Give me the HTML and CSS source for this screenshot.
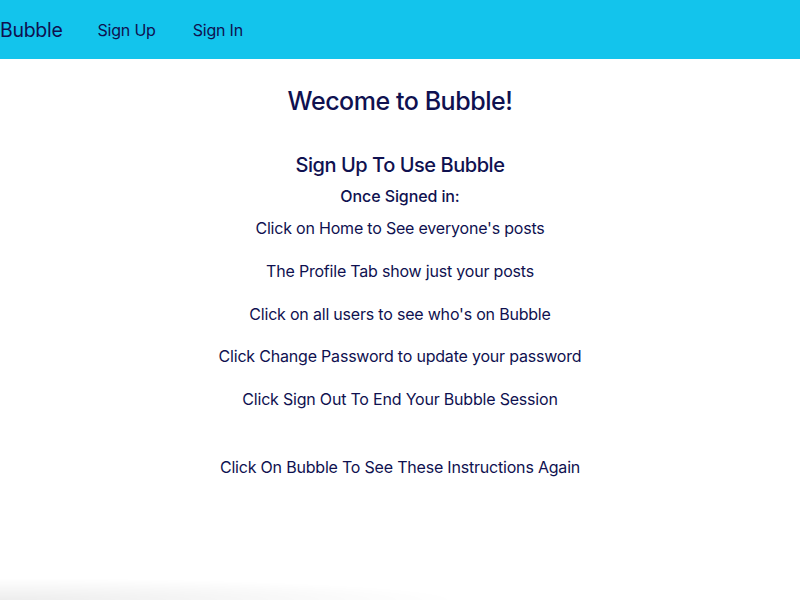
FILE: index.html
```html
<!DOCTYPE html>
<html>
<head>
<meta charset="utf-8">
<link rel="stylesheet" href="styles.css">
</head>
<body>
<nav class="navbar">
  <a class="brand" href="#">Bubble</a>
  <a class="nav-link" href="#">Sign Up</a>
  <a class="nav-link" href="#">Sign In</a>
</nav>
<main class="intro">
  <h1 class="title">Wecome to Bubble!</h1>
  <h2 class="subtitle">Sign Up To Use Bubble</h2>
  <h3 class="once">Once Signed in:</h3>
  <p class="step">Click on Home to See everyone's posts</p>
  <p class="step">The Profile Tab show just your posts</p>
  <p class="step">Click on all users to see who's on Bubble</p>
  <p class="step">Click Change Password to update your password</p>
  <p class="step">Click Sign Out To End Your Bubble Session</p>
  <p class="step again">Click On Bubble To See These Instructions Again</p>
</main>
<div class="shade"></div>
</body>
</html>
```
FILE: styles.css
```css
html, body {
  margin: 0;
  padding: 0;
  background: #ffffff;
}
body {
  font-family: Inter, "Noto Sans", sans-serif;
  color: #0f1150;
  font-size: 16px;
  letter-spacing: -0.2px;
  height: 600px;
  overflow: hidden;
}
a {
  color: #0f1150;
  text-decoration: none;
}
.navbar {
  height: 59px;
  background: #13c4ec;
  display: flex;
  align-items: center;
}
.brand {
  font-size: 19.5px;
  letter-spacing: -0.3px;
  line-height: 24px;
  margin-right: 35px;
}
.nav-link {
  font-size: 16px;
  line-height: 24px;
  margin-right: 37px;
}
.intro {
  text-align: center;
  padding-top: 25px;
}
.title {
  font-size: 25px;
  font-weight: 500;
  letter-spacing: -0.45px;
  line-height: 34px;
  margin: 0 0 35px;
}
.subtitle {
  font-size: 20px;
  font-weight: 500;
  letter-spacing: -0.45px;
  line-height: 24px;
  margin: 0 0 9px;
}
.once {
  font-size: 16px;
  font-weight: 500;
  letter-spacing: -0.1px;
  line-height: 20px;
  margin: 0 0 10px;
}
.step {
  margin: 0 0 18.75px;
  line-height: 24px;
}
.again {
  margin-top: 44px;
}
.shade {
  position: fixed;
  left: 0;
  bottom: 0;
  width: 460px;
  height: 22px;
  background: radial-gradient(ellipse 100% 100% at 0% 100%, rgba(0,0,0,0.07), rgba(0,0,0,0) 100%);
  pointer-events: none;
}
```
